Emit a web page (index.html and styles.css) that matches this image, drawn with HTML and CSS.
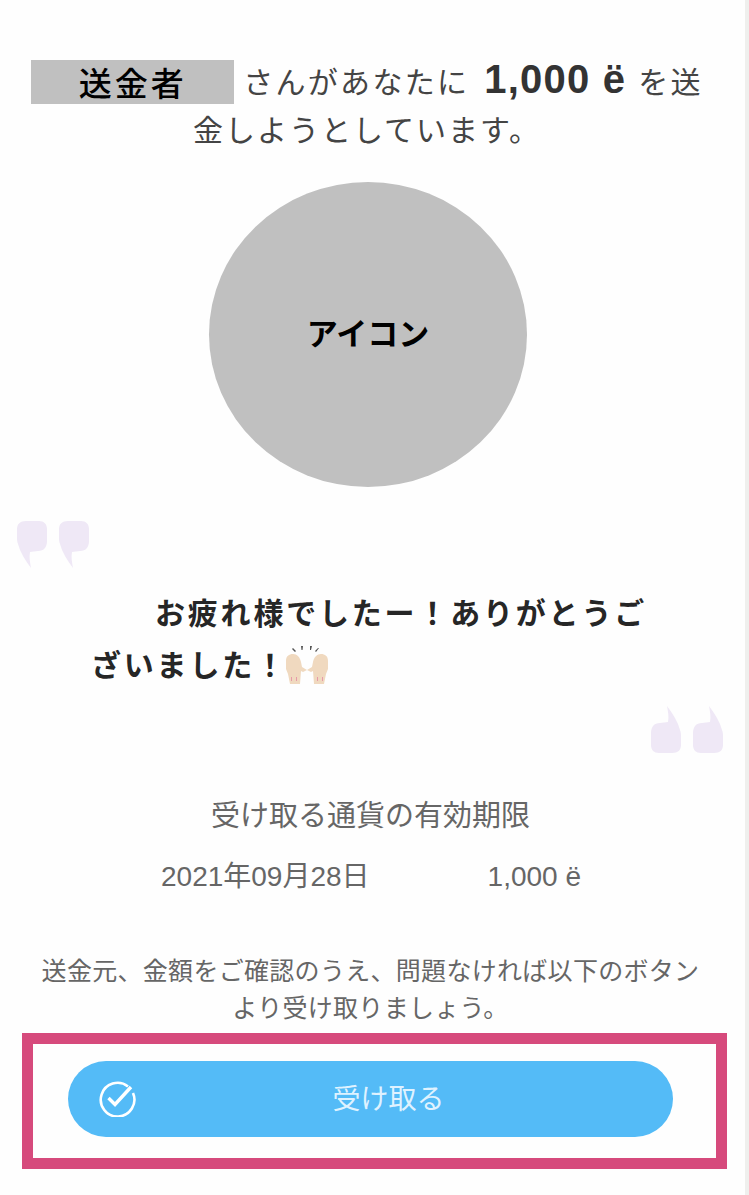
FILE: index.html
```html
<!DOCTYPE html>
<html>

<head>
    <meta charset="utf-8" />
    <title>受け取り</title>
    <link rel="stylesheet" href="styles.css">
</head>

<body>
    <div class="page">
        <p class="lead"><span class="sender">送金者</span> さんがあなたに <b class="amount">1,000 ë</b> を送<br><span class="lead-second">金しようとしています。</span></p>

        <div class="avatar">アイコン</div>

        <div class="quote">
            <svg class="mark" width="74" height="50" viewBox="0 0 74 50">
                <path d="M9 1h13c5 0 8 3 8 8v12c0 6-3 10-9 10l-8 1c-1 5 0 11 1 16-6-8-11-16-13-24-1-2-1-5-1-7V9c0-5 3-8 9-8z" />
                <path d="M51 1h13c5 0 8 3 8 8v12c0 6-3 10-9 10l-8 1c-1 5 0 11 1 16-6-8-11-16-13-24-1-2-1-5-1-7V9c0-5 3-8 9-8z" />
            </svg>
            <p class="message">お疲れ様でしたー！ありがとうご<br>ざいました！<svg class="hands" width="44" height="38" viewBox="0 0 44 38">
                    <path fill="#555" d="M8 2l3 3-1 1-3-3zM16 0h2l-.5 4h-1zM25 0h2l-1 4h-1zM34 2l-3 4-1-1 3-3z" />
                    <path fill="#f0d9bf" d="M1 15c0-5 3-7 7-7s7 3 8 8l1 5 5 3-4 2-2-1-1 13H5L3 28 1 23zM43 15c0-5-3-7-7-7s-7 3-8 8l-1 5-5 3 4 2 2-1 1 13h10l2-10 2-5z" />
                    <path fill="#e79aa8" d="M6 31h1v4H6zM11 31h1v4h-1zM32 31h1v4h-1zM37 31h1v4h-1z" />
                </svg></p>
            <svg class="mark mark-end" width="74" height="50" viewBox="0 0 74 50">
                <g transform="rotate(180 37 25)">
                    <path d="M9 1h13c5 0 8 3 8 8v12c0 6-3 10-9 10l-8 1c-1 5 0 11 1 16-6-8-11-16-13-24-1-2-1-5-1-7V9c0-5 3-8 9-8z" />
                    <path d="M51 1h13c5 0 8 3 8 8v12c0 6-3 10-9 10l-8 1c-1 5 0 11 1 16-6-8-11-16-13-24-1-2-1-5-1-7V9c0-5 3-8 9-8z" />
                </g>
            </svg>
        </div>

        <p class="expire-title">受け取る通貨の有効期限</p>
        <div class="expire-row">
            <span>2021年09月28日</span>
            <span>1,000 ë</span>
        </div>

        <p class="note">送金元、金額をご確認のうえ、問題なければ以下のボタン<br>より受け取りましょう。</p>

        <div class="highlight">
            <a class="receive" href="javascript:;">
                <svg class="check" width="38" height="38" viewBox="0 0 38 38" fill="none" stroke="#fff">
                    <path stroke-width="2.6" d="M30 7.500A16.800 16.800 0 1 0 35 14" />
                    <path stroke-width="3.400" d="M10.500 19l6.500 6.500L33 8" />
                </svg>
                受け取る
            </a>
        </div>
    </div>
</body>

</html>
```

FILE: styles.css
```css
* {
    margin: 0;
    padding: 0;
    box-sizing: border-box;
}

body {
    width: 749px;
    height: 1195px;
    overflow: hidden;
    background: #efefed;
    font-family: "Noto Sans CJK JP", "Liberation Sans", sans-serif;
}

.page {
    width: 745px;
    height: 1195px;
    padding-top: 56px;
    background: #fefefe;
    color: #444;
}

.lead {
    width: 700px;
    margin-left: 17px;
    font-size: 30px;
    line-height: 48px;
    letter-spacing: 2.3px;
    text-align: center;
}

.lead-second {
    letter-spacing: 2px;
}

.sender {
    display: inline-block;
    width: 203px;
    height: 44px;
    background: #c0c0c0;
    color: #000;
    font-size: 33px;
    font-weight: 500;
    line-height: 44px;
    letter-spacing: 3px;
    vertical-align: -3px;
}

.amount {
    margin: 0 3px 0 6px;
    font-family: "Liberation Sans", sans-serif;
    font-size: 40px;
    line-height: 0;
    letter-spacing: 1.2px;
    color: #333;
}

.avatar {
    display: flex;
    width: 318px;
    height: 305px;
    margin: 30px 0 0 209px;
    padding-bottom: 6px;
    align-items: center;
    justify-content: center;
    border-radius: 50%;
    background: #c0c0c0;
    color: #000;
    font-size: 31px;
    font-weight: bold;
}

.quote {
    margin-top: 33px;
}

.mark {
    display: block;
    margin-left: 17px;
    fill: #efe8f6;
}

.mark-end {
    margin: 15px 0 0 649px;
}

.message {
    margin: 15px 0 0 91px;
    font-size: 30px;
    font-weight: bold;
    line-height: 52px;
    letter-spacing: 2.8px;
    text-indent: 64px;
    color: #262626;
}

.hands {
    margin-left: -3px;
    vertical-align: -8px;
}

.expire-title {
    margin-top: 39px;
    padding-right: 4px;
    font-size: 29px;
    line-height: 40px;
    color: #666;
    text-align: center;
}

.expire-row {
    display: flex;
    margin: 24px 0 0 161px;
    gap: 118px;
    font-family: "Liberation Sans", "Noto Sans CJK JP", sans-serif;
    font-size: 28px;
    line-height: 40px;
    color: #666;
}

.note {
    margin: 54px 0 0;
    padding-right: 4px;
    font-size: 25px;
    line-height: 37px;
    letter-spacing: .3px;
    color: #666;
    text-align: center;
}

.highlight {
    width: 705px;
    height: 136px;
    margin: 8px 0 0 22px;
    padding: 17px 0 0 35px;
    border: 11px solid #d64a7c;
}

.receive {
    display: flex;
    position: relative;
    width: 605px;
    height: 76px;
    padding: 0 0 4px 36px;
    align-items: center;
    justify-content: center;
    border-radius: 38px;
    background: #54bbf7;
    color: #dff2ff;
    font-size: 28px;
    text-decoration: none;
}

.check {
    position: absolute;
    left: 30px;
    top: 18px;
}
```
